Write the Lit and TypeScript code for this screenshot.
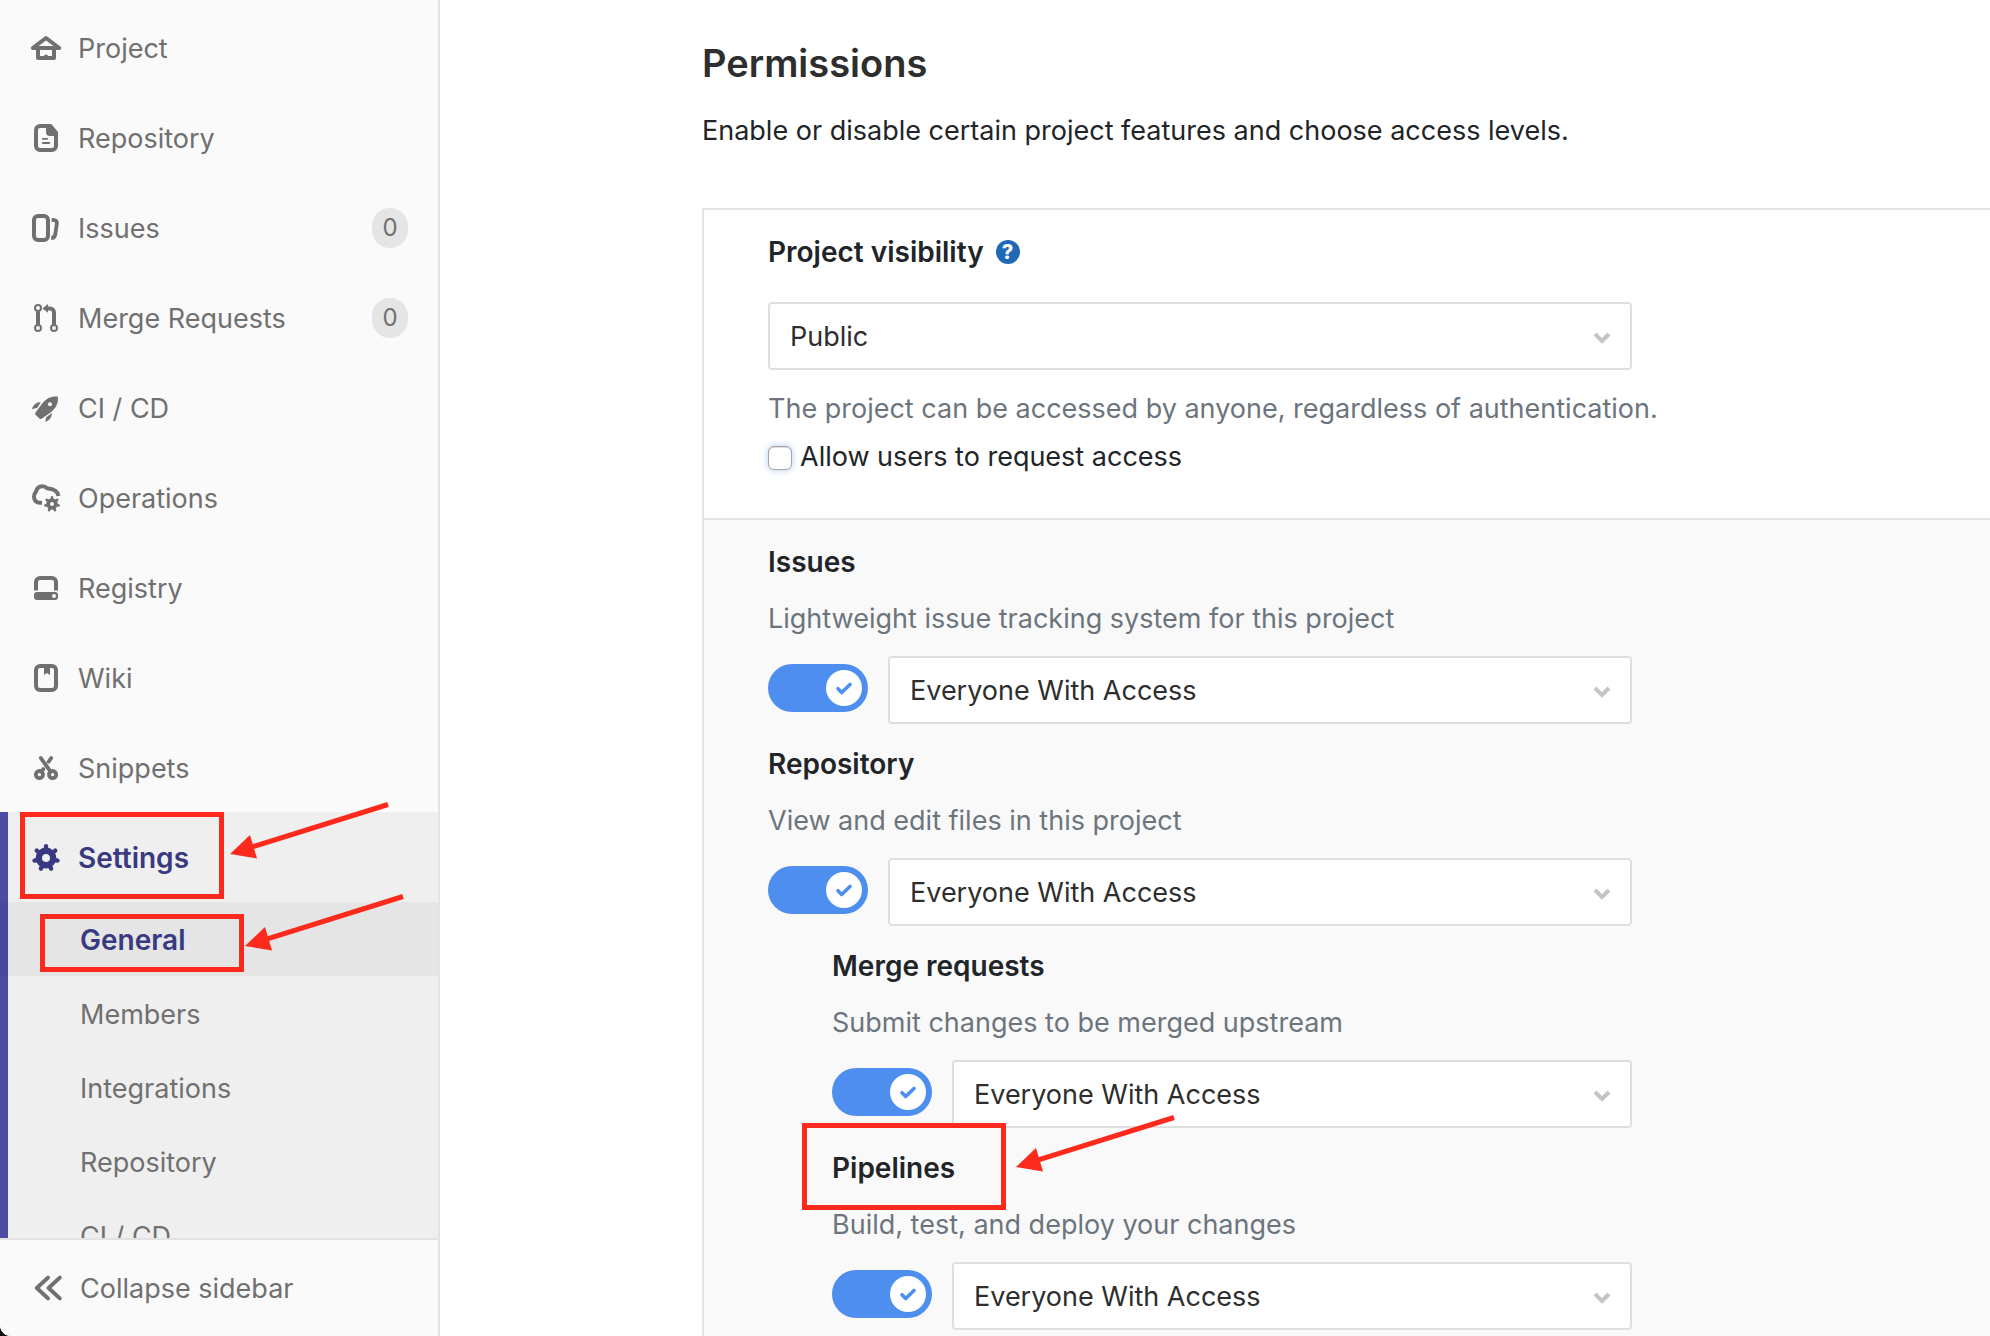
import { LitElement, html, svg, css, nothing, type TemplateResult } from "lit";
import { customElement, property, state } from "lit/decorators.js";
import { classMap } from "lit/directives/class-map.js";

/* A cog with evenly spaced rounded teeth around a punched centre. */
const cog = (cx: number, cy: number, body: number, tip: number, tooth: number, hole: number) => {
  const start = hole + tooth / 2 + 0.1;
  const teeth = Array.from({ length: 7 }, (_, i) => {
    const a = (i * 2 * Math.PI) / 7 - Math.PI / 2;
    return `M${cx + start * Math.cos(a)} ${cy + start * Math.sin(a)}L${cx + tip * Math.cos(a)} ${cy + tip * Math.sin(a)}`;
  }).join("");
  return svg`
    <circle cx=${cx} cy=${cy} r=${(body + hole) / 2} fill="none" stroke="currentColor" stroke-width=${body - hole} />
    <path d=${teeth} fill="none" stroke="currentColor" stroke-width=${tooth} stroke-linecap="round" />`;
};

const icons: Record<string, TemplateResult> = {
  project: svg`
    <g fill="none" stroke="currentColor" stroke-width="2" stroke-linejoin="round" stroke-linecap="round">
      <path d="M1.4 8 8 3l6.600 5z" /><path d="M4 8v5h8V8" />
    </g>
    <path d="M7 13v-1a1 .8 0 0 1 2 0v1z" fill="currentColor" />`,
  repository: svg`
    <path d="M5 2h5.200L13 5.400V12a2 2 0 0 1-2 2H5a2 2 0 0 1-2-2V4a2 2 0 0 1 2-2z" fill="none" stroke="currentColor" stroke-width="2" />
    <path d="M8 1.500h2.500L13.500 5v2H10a2 2 0 0 1-2-2z" fill="currentColor" />
    <path d="M6.400 8.400h2.200M6.400 10.500h3.200" stroke="currentColor" stroke-width=".9" stroke-linecap="round" />`,
  issues: svg`
    <rect x="2" y="2" width="7" height="12" rx="2" fill="none" stroke="currentColor" stroke-width="2" />
    <path d="M10.800 3.900h.6c1.500 0 2.200.7 2 2.100l-.8 5.300c-.2 1.200-.7 1.700-2 1.700" fill="none" stroke="currentColor" stroke-width="1.900" />`,
  merge: svg`
    <g fill="none" stroke="currentColor">
      <circle cx="4" cy="3" r="1.500" /><circle cx="4" cy="13" r="1.500" /><circle cx="12" cy="13" r="1.500" />
      <path d="M4 4.700v6.600M8 3.200h2a2 2 0 0 1 2 2v6.100" stroke-width="2" />
    </g>
    <path d="M6.200 3.200 9 1v4.400z" fill="currentColor" />`,
  rocket: svg`
    <path fill="currentColor" fill-rule="evenodd" d="M13.900 2.300C10.600 2 8 3.200 5.900 6L2.700 10.400c-.2.400-.1.800.2 1.100l1.800 1.800c.3.300.7.300 1.100.100L10.300 10.300C13.100 8.100 14.300 5.600 13.900 2.300zM10 5.100a1 1 0 1 1 0 2 1 1 0 0 1 0-2z" />
    <path fill="currentColor" d="M.9 8.500C1.800 6.500 3 5 5.400 5L3.600 8zM7.700 15C9.600 14.100 11 12.900 10.900 10.500L8 12.800z" />`,
  operations: svg`
    <path d="M6 10.400H4.900C3.200 10.400 2 9.100 2 7.300c0-1.100.5-1.900 1-2.500.4-1.600 1.500-2.700 3.200-2.700.9 0 1.700.4 2.300 1 2.500.2 5.400 1 5.700 3.900" fill="none" stroke="currentColor" stroke-width="2" />
    ${cog(11, 11, 2.9, 3.4, 1.3, 1)}`,
  registry: svg`
    <path d="M3 9.300V5a2 2 0 0 1 2-2h6a2 2 0 0 1 2 2v4.300" fill="none" stroke="currentColor" stroke-width="2" />
    <path fill="currentColor" fill-rule="evenodd" d="M3.500 10h9a1.500 1.500 0 0 1 1.500 1.500v1a1.500 1.500 0 0 1-1.500 1.500h-9A1.500 1.500 0 0 1 2 12.500v-1A1.500 1.500 0 0 1 3.500 10zM12 11a1 1 0 1 0 0 2 1 1 0 0 0 0-2z" />`,
  wiki: svg`
    <rect x="3" y="2" width="10" height="12" rx="2" fill="none" stroke="currentColor" stroke-width="2" />
    <path d="M7 2h3v4.500l-1.500-1L7 6.500z" fill="currentColor" />`,
  snippets: svg`
    <g fill="none" stroke="currentColor" stroke-width="1.900">
      <circle cx="4.700" cy="11.300" r="1.800" /><circle cx="11.300" cy="11.300" r="1.800" />
      <path d="M5.400 3 10.300 9.800M10.600 3 9.300 4.900M6.700 8.500 5.700 9.800" stroke-linecap="round" />
    </g>`,
  settings: cog(8, 8, 5.2, 5.9, 2.2, 2),
  collapse: svg`
    <path d="M8 2.800 2.400 8 8 13.200M13.900 2.800 8.300 8l5.600 5.200" fill="none" stroke="currentColor" stroke-width="2" stroke-linecap="round" stroke-linejoin="round" />`,
};

const icon = (name: string) =>
  html`<svg class="icon" viewBox="0 0 16 16" aria-hidden="true">${icons[name]}</svg>`;

const base = css`
  * { box-sizing: border-box; }
  :host { font-family: Inter, "Liberation Sans", sans-serif; font-size: 27px; line-height: 40px; }
`;

/* Red box with an arrow pointing at it, laid over the item that holds it. */
@customElement("callout-mark")
export class CalloutMark extends LitElement {
  static styles = css`
    :host { position: absolute; z-index: 2; width: 204px; border: 5px solid #fc2a1c; box-sizing: border-box; pointer-events: none; }
    .arrow { position: absolute; left: 205px; top: -16px; width: 162px; height: 60px; overflow: visible; }
    :host(.near) .arrow { left: 200px; top: -26px; }
    :host(.far) .arrow { left: 209px; top: -14px; }
  `;
  render() {
    return html`<svg class="arrow" viewBox="0 0 162 60" aria-hidden="true">
      <path d="M158 3.500 20 46.600" stroke="#fc2a1c" stroke-width="5" fill="none" />
      <path d="M0 53 20 34l7 23.500z" fill="#fc2a1c" />
    </svg>`;
  }
}

const navItems = [
  { label: "Project", icon: "project" },
  { label: "Repository", icon: "repository" },
  { label: "Issues", icon: "issues", count: 0 },
  { label: "Merge Requests", icon: "merge", count: 0 },
  { label: "CI / CD", icon: "rocket" },
  { label: "Operations", icon: "operations" },
  { label: "Registry", icon: "registry" },
  { label: "Wiki", icon: "wiki" },
  { label: "Snippets", icon: "snippets" },
];
const settingsItems = ["General", "Members", "Integrations", "Repository", "CI / CD"];

@customElement("project-sidebar")
export class ProjectSidebar extends LitElement {
  static styles = [
    base,
    css`
      :host {
        display: flex; flex-direction: column; min-height: 0; overflow: hidden;
        background: #fafafa; color: #707070;
        border-right: 2px solid #e3e3e3; border-bottom-left-radius: 11px;
      }
      a { color: inherit; text-decoration: none; }
      ul { list-style: none; margin: 0; padding: 0; }
      .nav { flex: 1; min-height: 0; padding-top: 2px; overflow-y: auto; scrollbar-width: none; }
      .item { position: relative; }
      .row { display: flex; align-items: center; gap: 16px; height: 90px; padding: 2px 30px 0; }
      .icon { width: 32px; height: 32px; flex: none; }
      .label { flex: 1; padding-top: 2px; }
      .badge {
        min-width: 36px; height: 40px; border-radius: 20px; background: #e5e5e5;
        font-size: 24px; text-align: center;
      }
      .group { background: linear-gradient(to right, #4b4ba3 8px, #efefef 8px); }
      .sub { display: flex; align-items: center; height: 74px; padding: 4px 30px 0 80px; }
      .active { padding-top: 2px; color: #393982; font-size: 28px; font-weight: 600; }
      .active .label { padding-top: 0; }
      .current { background: rgba(0, 0, 0, 0.04); }
      .on-row { left: 20px; top: 0; height: 87px; }
      .on-sub { left: 40px; top: 12px; height: 58px; }
      .collapse {
        display: flex; align-items: center; gap: 16px; height: 98px; flex: none;
        padding: 0 32px; border: 0; border-top: 2px solid #e3e3e3;
        background: #fafafa; color: inherit; font: inherit; text-align: left;
      }
    `,
  ];
  render() {
    return html`
      <nav class="nav" aria-label="Project">
        <ul>
          ${navItems.map(
            (n) => html`<li class="item">
              <a class="row" href="#">
                ${icon(n.icon)}<span class="label">${n.label}</span>
                ${n.count === undefined ? nothing : html`<span class="badge">${n.count}</span>`}
              </a>
            </li>`
          )}
          <li class="group">
            <div class="item">
              <a class="row active" href="#">${icon("settings")}<span class="label">Settings</span></a>
              <callout-mark class="on-row"></callout-mark>
            </div>
            <ul>
              ${settingsItems.map(
                (s, i) => html`<li class="item">
                  <a class=${classMap({ sub: true, active: i === 0, current: i === 0 })} href="#">${s}</a>
                  ${i === 0 ? html`<callout-mark class="on-sub near"></callout-mark>` : nothing}
                </li>`
              )}
            </ul>
          </li>
        </ul>
      </nav>
      <button class="collapse" type="button">${icon("collapse")}<span class="label">Collapse sidebar</span></button>
    `;
  }
}

const fieldStyles = css`
  .select-wrap { display: grid; flex: 1; align-items: center; }
  .select-wrap > * { grid-area: 1 / 1; }
  .select {
    width: 100%; height: 68px; padding: 2px 56px 0 20px; appearance: none;
    border: 2px solid #dfdfdf; border-radius: 4px; background: #fff;
    color: #2e2e2e; font: inherit;
  }
  .chevron { justify-self: end; width: 18px; height: 12px; margin: 4px 21px 0 0; pointer-events: none; }
  .heading { margin: 0; color: #212529; font-size: 28px; font-weight: 600; line-height: 40px; }
  .help { margin: 0; color: #6c757d; }
`;

const selectBox = (id: string, value: string, label: string) => html`
  <div class="select-wrap">
    <select class="select" id=${id} aria-label=${label}><option>${value}</option></select>
    <svg class="chevron" viewBox="0 0 18 12" aria-hidden="true">
      <path d="M2 2 9 9 16 2" fill="none" stroke="#c4c4c4" stroke-width="4" />
    </svg>
  </div>`;

@customElement("feature-row")
export class FeatureRow extends LitElement {
  @property() label = "";
  @property() help = "";
  @property({ type: Boolean }) marked = false;
  @state() private on = true;

  static styles = [
    base,
    fieldStyles,
    css`
      :host { display: block; }
      .heading { position: relative; }
      .help { margin: 17px 0; }
      .controls { display: flex; gap: 20px; }
      .toggle {
        display: flex; justify-content: flex-end; width: 100px; height: 48px; margin-top: 8px;
        padding: 6px; border: 0; border-radius: 24px; background: #bfbfbf; flex: none;
      }
      .toggle.on { background: #4e8eee; }
      .toggle:not(.on) { justify-content: flex-start; }
      .knob { width: 36px; height: 36px; }
      .on-heading { left: -30px; top: -25px; height: 87px; }
    `,
  ];
  render() {
    return html`
      <h3 class="heading">
        ${this.label}${this.marked ? html`<callout-mark class="on-heading far"></callout-mark>` : nothing}
      </h3>
      <p class="help">${this.help}</p>
      <div class="controls">
        <button
          class=${classMap({ toggle: true, on: this.on })}
          type="button" role="switch" aria-checked=${this.on} aria-label=${this.label}
          @click=${() => (this.on = !this.on)}
        >
          <svg class="knob" viewBox="0 0 36 36" aria-hidden="true">
            <circle cx="18" cy="18" r="18" fill="#fff" />
            <path d="M12 18.700 15.700 22.500 24 14.500" fill="none" stroke="#4e8eee" stroke-width="3.600" stroke-linecap="round" stroke-linejoin="round" />
          </svg>
        </button>
        ${selectBox("access", "Everyone With Access", `${this.label} access level`)}
      </div>
    `;
  }
}

@customElement("app-root")
export class AppRoot extends LitElement {
  static styles = [
    base,
    fieldStyles,
    css`
      :host { display: grid; grid-template-columns: 440px minmax(0, 1fr); height: 100vh; background: #10140f; }
      .main {
        display: flex; flex-direction: column; padding: 39px 0 0 262px;
        overflow: auto; scrollbar-width: none; background: #fff; color: #212529;
      }
      .title { margin: 0 0 24px; color: #2e2e2e; font-size: 38px; font-weight: 600; line-height: 48px; }
      .intro { margin: 0 0 57px; }
      .panel { display: flex; flex-direction: column; flex: 1 0 auto; border: solid #e5e5e5; border-width: 2px 0 0 2px; }
      .section { padding: 22px 64px 41px; }
      .fields { max-width: 864px; }
      .features {
        flex: 1; padding-bottom: 0; border-top: 2px solid #e5e5e5; background: #f9f9f9;
      }
      .stack { display: flex; flex-direction: column; gap: 20px; }
      .nested { padding-left: 64px; }
      .visibility { display: flex; align-items: center; gap: 12px; margin-bottom: 30px; }
      .info {
        width: 24px; height: 24px; border-radius: 50%; background: #1f69b5; color: #fff;
        font-size: 20px; font-weight: 800; line-height: 24px; text-align: center; text-decoration: none;
      }
      .note { margin: 19px 0 8px; }
      .check { display: flex; align-items: center; gap: 8px; }
      .box {
        appearance: none; width: 24px; height: 24px; margin: 2px 0 0; border: 1px solid #a6a6a6;
        border-radius: 6px; background: #fff; box-shadow: 0 0 6px rgba(90, 150, 230, 0.5), inset 0 1px 1px rgba(0, 0, 0, 0.15);
      }
    `,
  ];
  render() {
    return html`
      <project-sidebar></project-sidebar>
      <main class="main">
        <h1 class="title">Permissions</h1>
        <p class="intro">Enable or disable certain project features and choose access levels.</p>
        <div class="panel">
          <section class="section">
            <div class="fields">
              <div class="visibility">
                <label class="heading" for="visibility">Project visibility</label>
                <a class="info" href="#" aria-label="Visibility help">?</a>
              </div>
              ${selectBox("visibility", "Public", "Project visibility")}
            </div>
            <p class="help note">The project can be accessed by anyone, regardless of authentication.</p>
            <label class="check"><input class="box" type="checkbox" />Allow users to request access</label>
          </section>
          <section class="section features">
            <div class="fields stack">
              <feature-row label="Issues" help="Lightweight issue tracking system for this project"></feature-row>
              <feature-row label="Repository" help="View and edit files in this project"></feature-row>
              <div class="nested stack">
                <feature-row label="Merge requests" help="Submit changes to be merged upstream"></feature-row>
                <feature-row label="Pipelines" help="Build, test, and deploy your changes" marked></feature-row>
              </div>
            </div>
          </section>
        </div>
      </main>
    `;
  }
}
